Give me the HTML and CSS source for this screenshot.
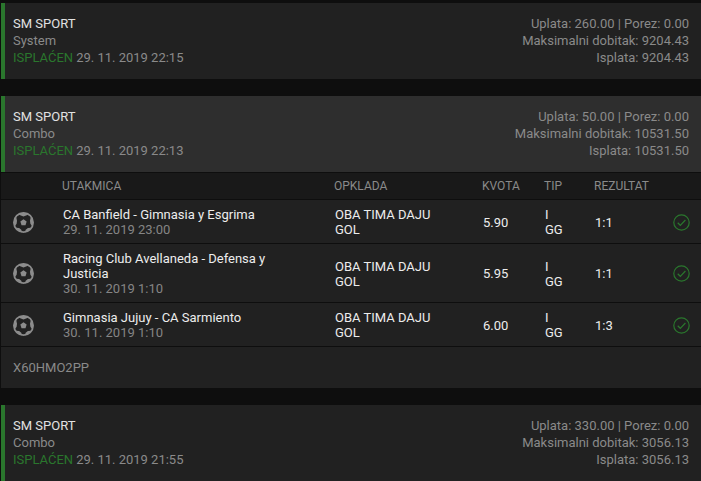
FILE: index.html
```html
<!DOCTYPE html>
<html lang="hr">
<head>
<meta charset="utf-8">
<meta name="viewport" content="width=device-width, initial-scale=1">
<title>SM SPORT</title>
<link rel="stylesheet" href="styles.css">
</head>
<body>
<svg class="sprite" aria-hidden="true">
  <symbol id="ball" viewBox="0 0 22 22">
    <circle cx="11" cy="11" r="10.1" fill="none" stroke="currentColor" stroke-width="1.7"/>
    <path fill="currentColor" d="M11 7.5 14.3 9.9 13.1 13.8H8.9L7.7 9.9z"/>
    <path fill="currentColor" d="M5.6 1.8Q11 -.4 16.4 1.8L14.4 3.4 11 4.6 7.6 3.4zM20 5.8Q22.2 11 20.4 15.4L18.2 12.4 17.8 9.2 18.6 5.6zM2 5.8 3.4 5.6 4.2 9.2 3.8 12.4 1.6 15.4Q-.2 11 2 5.8zM18.4 18.2Q15.8 21 12.4 21.6L13.3 18.7 15.6 16.8 19.4 16.4zM3.6 18.2Q6.2 21 9.6 21.6L8.7 18.7 6.4 16.8 2.6 16.4z"/>
  </symbol>
  <symbol id="check" viewBox="0 0 17 17">
    <g fill="none" stroke="currentColor" stroke-width="1.2">
      <circle cx="8.5" cy="8.5" r="7.7"/>
      <path d="M4.7 8.8 7.3 11.3 12.4 6"/>
    </g>
  </symbol>
</svg>
<main class="tickets">
  <article class="ticket">
    <header class="summary">
      <div>
        <h2 class="title">SM SPORT</h2>
        <p>System</p>
        <p class="state"><span class="paid">ISPLAĆEN</span><time>29. 11. 2019 22:15</time></p>
      </div>
      <div class="amounts">
        <p>Uplata: 260.00 | Porez: 0.00</p>
        <p>Maksimalni dobitak: 9204.43</p>
        <p>Isplata: 9204.43</p>
      </div>
    </header>
  </article>
  <article class="ticket">
    <header class="summary open">
      <div>
        <h2 class="title">SM SPORT</h2>
        <p>Combo</p>
        <p class="state"><span class="paid">ISPLAĆEN</span><time>29. 11. 2019 22:13</time></p>
      </div>
      <div class="amounts">
        <p>Uplata: 50.00 | Porez: 0.00</p>
        <p>Maksimalni dobitak: 10531.50</p>
        <p>Isplata: 10531.50</p>
      </div>
    </header>
    <table class="bets">
      <colgroup>
        <col class="col-sport"><col class="col-match"><col class="col-bet"><col class="col-odds"><col class="col-type"><col class="col-score"><col class="col-status">
      </colgroup>
      <thead>
        <tr><th></th><th>UTAKMICA</th><th>OPKLADA</th><th>KVOTA</th><th>TIP</th><th>REZULTAT</th><th></th></tr>
      </thead>
      <tbody>
        <tr>
          <td class="sport"><svg class="ball"><use href="#ball"/></svg></td>
          <td class="match">CA Banfield - Gimnasia y Esgrima <time class="kickoff">29. 11. 2019 23:00</time></td>
          <td class="bet">OBA TIMA DAJU GOL</td>
          <td>5.90</td>
          <td>I<br>GG</td>
          <td>1:1</td>
          <td class="status"><svg class="check"><use href="#check"/></svg></td>
        </tr>
        <tr>
          <td class="sport"><svg class="ball"><use href="#ball"/></svg></td>
          <td class="match">Racing Club Avellaneda - Defensa y Justicia <time class="kickoff">30. 11. 2019 1:10</time></td>
          <td class="bet">OBA TIMA DAJU GOL</td>
          <td>5.95</td>
          <td>I<br>GG</td>
          <td>1:1</td>
          <td class="status"><svg class="check"><use href="#check"/></svg></td>
        </tr>
        <tr>
          <td class="sport"><svg class="ball"><use href="#ball"/></svg></td>
          <td class="match">Gimnasia Jujuy - CA Sarmiento <time class="kickoff">30. 11. 2019 1:10</time></td>
          <td class="bet">OBA TIMA DAJU GOL</td>
          <td>6.00</td>
          <td>I<br>GG</td>
          <td>1:3</td>
          <td class="status"><svg class="check"><use href="#check"/></svg></td>
        </tr>
      </tbody>
    </table>
    <footer class="code">X60HMO2PP</footer>
  </article>
  <article class="ticket">
    <header class="summary">
      <div>
        <h2 class="title">SM SPORT</h2>
        <p>Combo</p>
        <p class="state"><span class="paid">ISPLAĆEN</span><time>29. 11. 2019 21:55</time></p>
      </div>
      <div class="amounts">
        <p>Uplata: 330.00 | Porez: 0.00</p>
        <p>Maksimalni dobitak: 3056.13</p>
        <p>Isplata: 3056.13</p>
      </div>
    </header>
  </article>
</main>
</body>
</html>
```
FILE: styles.css
```css
* {
  box-sizing: border-box;
}

body {
  margin: 0;
  background: #0e0e0e;
  color: #8a8a8a;
  font: 13px/17px Roboto, sans-serif;
}

h2,
p {
  margin: 0;
}

.sprite {
  display: none;
}

.tickets {
  display: flex;
  flex-direction: column;
  gap: 17px;
  padding: 3px 0 0 1px;
}

.ticket {
  background: #212121;
}

.summary {
  display: flex;
  justify-content: space-between;
  padding: 12px 12px 13px 8px;
  border-left: 4px solid #2a762d;
}

.open {
  background: #2e2e2e;
}

.title {
  color: #e2e2e2;
  font-size: 13px;
  font-weight: 400;
}

.state {
  display: flex;
  gap: 3px;
}

.paid {
  color: #2a762d;
}

.amounts {
  text-align: right;
}

.bets {
  width: 100%;
  table-layout: fixed;
  border-collapse: separate;
  border-spacing: 0;
  line-height: 15px;
}

.col-sport { width: 61px; }
.col-bet { width: 148px; }
.col-odds { width: 62px; }
.col-type { width: 50px; }
.col-score { width: 64px; }
.col-status { width: 43px; }

.bets th,
.bets td {
  border-top: 1px solid #0e0e0e;
  text-align: left;
}

.bets th {
  padding: 6px 0 5px;
  background: #191919;
  font-size: 12px;
  font-weight: 400;
}

.bets td {
  padding: 7px 0 6px 1px;
  color: #ededed;
  vertical-align: middle;
}

.bets .sport {
  padding-left: 12px;
}

.bets .match {
  padding-right: 40px;
}

.bets .bet {
  padding-right: 32px;
}

.bets .status {
  padding-right: 11px;
}

.kickoff {
  display: block;
  color: #858585;
}

.ball,
.check {
  display: block;
}

.ball {
  width: 21px;
  height: 21px;
  color: #8c8c8c;
}

.check {
  width: 17px;
  height: 17px;
  margin-left: auto;
  color: #2a762d;
}

.code {
  padding: 12px;
  border-top: 1px solid #0e0e0e;
}
```
